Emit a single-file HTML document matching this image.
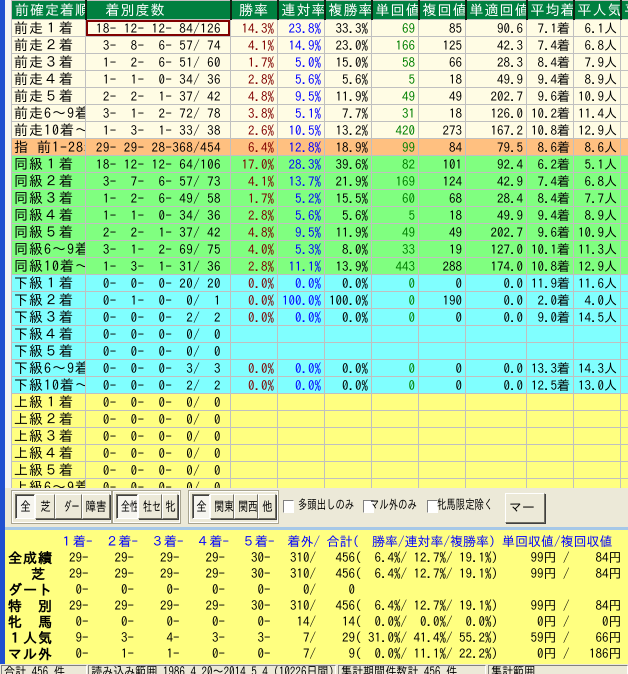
<!DOCTYPE html>
<html><head><meta charset="utf-8"><style>
*{margin:0;padding:0;box-sizing:border-box}
body{width:628px;height:674px;overflow:hidden;background:#ece9d8;position:relative;font-family:"IPAGothic","Noto Sans CJK JP",monospace;font-size:13px}
#strip{position:absolute;left:0;top:0;width:5px;height:664px;background:#1f4fd0}
#strip2{position:absolute;left:5px;top:0;width:6px;height:488px;background:#f4f4f4}
#tw{position:absolute;left:11px;top:0;width:617px;height:488px;overflow:hidden}
table{border-collapse:collapse;table-layout:fixed;width:625px}
td,th{border:1px solid #c0c0c0;height:17px;line-height:15px;white-space:pre;overflow:hidden;padding:0 3px;text-align:right;font-weight:normal}
th{background:#008040;color:#fff;height:19px;border:1px solid #c0c0c0;border-right:2px solid #102010;text-align:center;font-size:14px;letter-spacing:1px}
th.l{text-align:left}
td.l{text-align:left;letter-spacing:1px;font-size:14px;padding-left:2px}
td.n{padding-right:9px;letter-spacing:0.45px}
.r{color:#800000}.b{color:#0000ff}.g{color:#008000}
tr.c td{background:#fffce4}tr.o td{background:#ffc080}tr.gr td{background:#80ff80}tr.cy td{background:#80ffff}tr.y td{background:#ffff80}
.sel{box-shadow:inset 0 0 0 2px #800000}
#panel{position:absolute;left:5px;top:488px;width:623px;height:39px;background:#ece9d8}
.grp{position:absolute;top:3px;height:32px;border:1px solid #fff;outline:1px solid #a8a490;background:#ece9d8}
.bt{position:absolute;top:2px;height:25px;border:1px solid;border-color:#fff #716f64 #716f64 #fff;box-shadow:1px 1px 0 #404040;font-size:13px;line-height:23px;text-align:center;background:#ece9d8;white-space:nowrap;overflow:hidden}
.bt span{display:inline-block;transform:scaleX(.8)}
.bt.on{border-color:#716f64 #fff #fff #716f64;box-shadow:inset 1px 1px 0 #404040;background:#f6f5ef}
.cb{position:absolute;top:12px;width:11px;height:13px;background:#fff;border:1px solid;border-color:#808080 #fff #fff #808080}
.ct{position:absolute;top:10px;font-size:13px;white-space:nowrap;transform:scaleX(.72);transform-origin:left}
#bl{position:absolute;left:5px;top:527px;width:623px;height:3px;background:#a6c8e8}
#sum{position:absolute;left:5px;top:530px;width:623px;height:134px;background:#ffff80;font-size:13px}
.s{position:absolute;white-space:pre;line-height:16px}
.h{color:#0000ff}
.lb{position:absolute;left:3px;font-weight:bold;font-size:14px;line-height:16px;letter-spacing:1px}
#st{position:absolute;left:0;top:664px;width:628px;height:10px;background:#ece9d8;overflow:hidden;font-size:13px}
#st div{position:absolute;top:1px;height:14px;border:1px solid;border-color:#808080 #fff #fff #808080;line-height:12px;padding-left:2px;white-space:pre;overflow:hidden}
#st span{display:inline-block;transform:scaleX(.85);transform-origin:left}
</style></head><body>
<div id="strip"></div><div id="strip2"></div>
<div id="tw"><table>
<colgroup><col style="width:74px"><col style="width:145px"><col style="width:47px"><col style="width:47px"><col style="width:47px"><col style="width:47px"><col style="width:47px"><col style="width:61px"><col style="width:47px"><col style="width:47px"><col style="width:16px"></colgroup>
<tr><th class="l">前確定着順</th><th class="l">  着別度数</th><th>勝率</th><th>連対率</th><th>複勝率</th><th>単回値</th><th>複回値</th><th>単適回値</th><th>平均着</th><th>平人気</th><th class="l">平</th></tr>
<tr class="c"><td class="l">前走１着</td><td class="n sel">18- 12- 12- 84/126</td><td class="r">14.3%</td><td class="b">23.8%</td><td>33.3%</td><td class="g">69</td><td>85</td><td>90.6</td><td>7.1着</td><td>6.1人</td><td></td></tr>
<tr class="c"><td class="l">前走２着</td><td class="n"> 3-  8-  6- 57/ 74</td><td class="r">4.1%</td><td class="b">14.9%</td><td>23.0%</td><td class="g">166</td><td>125</td><td>42.3</td><td>7.4着</td><td>6.8人</td><td></td></tr>
<tr class="c"><td class="l">前走３着</td><td class="n"> 1-  2-  6- 51/ 60</td><td class="r">1.7%</td><td class="b">5.0%</td><td>15.0%</td><td class="g">58</td><td>66</td><td>28.3</td><td>8.4着</td><td>7.9人</td><td></td></tr>
<tr class="c"><td class="l">前走４着</td><td class="n"> 1-  1-  0- 34/ 36</td><td class="r">2.8%</td><td class="b">5.6%</td><td>5.6%</td><td class="g">5</td><td>18</td><td>49.9</td><td>9.4着</td><td>8.9人</td><td></td></tr>
<tr class="c"><td class="l">前走５着</td><td class="n"> 2-  2-  1- 37/ 42</td><td class="r">4.8%</td><td class="b">9.5%</td><td>11.9%</td><td class="g">49</td><td>49</td><td>202.7</td><td>9.6着</td><td>10.9人</td><td></td></tr>
<tr class="c"><td class="l">前走6～9着</td><td class="n"> 3-  1-  2- 72/ 78</td><td class="r">3.8%</td><td class="b">5.1%</td><td>7.7%</td><td class="g">31</td><td>18</td><td>126.0</td><td>10.2着</td><td>11.4人</td><td></td></tr>
<tr class="c"><td class="l">前走10着～</td><td class="n"> 1-  3-  1- 33/ 38</td><td class="r">2.6%</td><td class="b">10.5%</td><td>13.2%</td><td class="g">420</td><td>273</td><td>167.2</td><td>10.8着</td><td>12.9人</td><td></td></tr>
<tr class="o"><td class="l">指 前1-28着</td><td class="n">29- 29- 28-368/454</td><td class="r">6.4%</td><td class="b">12.8%</td><td>18.9%</td><td class="g">99</td><td>84</td><td>79.5</td><td>8.6着</td><td>8.6人</td><td></td></tr>
<tr class="gr"><td class="l">同級１着</td><td class="n">18- 12- 12- 64/106</td><td class="r">17.0%</td><td class="b">28.3%</td><td>39.6%</td><td class="g">82</td><td>101</td><td>92.4</td><td>6.2着</td><td>5.1人</td><td></td></tr>
<tr class="gr"><td class="l">同級２着</td><td class="n"> 3-  7-  6- 57/ 73</td><td class="r">4.1%</td><td class="b">13.7%</td><td>21.9%</td><td class="g">169</td><td>124</td><td>42.9</td><td>7.4着</td><td>6.8人</td><td></td></tr>
<tr class="gr"><td class="l">同級３着</td><td class="n"> 1-  2-  6- 49/ 58</td><td class="r">1.7%</td><td class="b">5.2%</td><td>15.5%</td><td class="g">60</td><td>68</td><td>28.4</td><td>8.4着</td><td>7.7人</td><td></td></tr>
<tr class="gr"><td class="l">同級４着</td><td class="n"> 1-  1-  0- 34/ 36</td><td class="r">2.8%</td><td class="b">5.6%</td><td>5.6%</td><td class="g">5</td><td>18</td><td>49.9</td><td>9.4着</td><td>8.9人</td><td></td></tr>
<tr class="gr"><td class="l">同級５着</td><td class="n"> 2-  2-  1- 37/ 42</td><td class="r">4.8%</td><td class="b">9.5%</td><td>11.9%</td><td class="g">49</td><td>49</td><td>202.7</td><td>9.6着</td><td>10.9人</td><td></td></tr>
<tr class="gr"><td class="l">同級6～9着</td><td class="n"> 3-  1-  2- 69/ 75</td><td class="r">4.0%</td><td class="b">5.3%</td><td>8.0%</td><td class="g">33</td><td>19</td><td>127.0</td><td>10.1着</td><td>11.3人</td><td></td></tr>
<tr class="gr"><td class="l">同級10着～</td><td class="n"> 1-  3-  1- 31/ 36</td><td class="r">2.8%</td><td class="b">11.1%</td><td>13.9%</td><td class="g">443</td><td>288</td><td>174.0</td><td>10.8着</td><td>12.9人</td><td></td></tr>
<tr class="cy"><td class="l">下級１着</td><td class="n"> 0-  0-  0- 20/ 20</td><td class="r">0.0%</td><td class="b">0.0%</td><td>0.0%</td><td class="g">0</td><td>0</td><td>0.0</td><td>11.9着</td><td>11.6人</td><td></td></tr>
<tr class="cy"><td class="l">下級２着</td><td class="n"> 0-  1-  0-  0/  1</td><td class="r">0.0%</td><td class="b">100.0%</td><td>100.0%</td><td class="g">0</td><td>190</td><td>0.0</td><td>2.0着</td><td>4.0人</td><td></td></tr>
<tr class="cy"><td class="l">下級３着</td><td class="n"> 0-  0-  0-  2/  2</td><td class="r">0.0%</td><td class="b">0.0%</td><td>0.0%</td><td class="g">0</td><td>0</td><td>0.0</td><td>9.0着</td><td>14.5人</td><td></td></tr>
<tr class="cy"><td class="l">下級４着</td><td class="n"> 0-  0-  0-  0/  0</td><td></td><td></td><td></td><td></td><td></td><td></td><td></td><td></td><td></td></tr>
<tr class="cy"><td class="l">下級５着</td><td class="n"> 0-  0-  0-  0/  0</td><td></td><td></td><td></td><td></td><td></td><td></td><td></td><td></td><td></td></tr>
<tr class="cy"><td class="l">下級6～9着</td><td class="n"> 0-  0-  0-  3/  3</td><td class="r">0.0%</td><td class="b">0.0%</td><td>0.0%</td><td class="g">0</td><td>0</td><td>0.0</td><td>13.3着</td><td>14.3人</td><td></td></tr>
<tr class="cy"><td class="l">下級10着～</td><td class="n"> 0-  0-  0-  2/  2</td><td class="r">0.0%</td><td class="b">0.0%</td><td>0.0%</td><td class="g">0</td><td>0</td><td>0.0</td><td>12.5着</td><td>13.0人</td><td></td></tr>
<tr class="y"><td class="l">上級１着</td><td class="n"> 0-  0-  0-  0/  0</td><td></td><td></td><td></td><td></td><td></td><td></td><td></td><td></td><td></td></tr>
<tr class="y"><td class="l">上級２着</td><td class="n"> 0-  0-  0-  0/  0</td><td></td><td></td><td></td><td></td><td></td><td></td><td></td><td></td><td></td></tr>
<tr class="y"><td class="l">上級３着</td><td class="n"> 0-  0-  0-  0/  0</td><td></td><td></td><td></td><td></td><td></td><td></td><td></td><td></td><td></td></tr>
<tr class="y"><td class="l">上級４着</td><td class="n"> 0-  0-  0-  0/  0</td><td></td><td></td><td></td><td></td><td></td><td></td><td></td><td></td><td></td></tr>
<tr class="y"><td class="l">上級５着</td><td class="n"> 0-  0-  0-  0/  0</td><td></td><td></td><td></td><td></td><td></td><td></td><td></td><td></td><td></td></tr>
<tr class="y"><td class="l">上級6～9着</td><td class="n"> 0-  0-  0-  0/  0</td><td></td><td></td><td></td><td></td><td></td><td></td><td></td><td></td><td></td></tr>
</table></div>

<div id="panel">
<div class="grp" style="left:7px;width:99px"><div class="bt on" style="left:2px;width:20px"><span>全</span></div><div class="bt" style="left:22px;width:20px"><span>芝</span></div><div class="bt" style="left:42px;width:27px"><span style="transform:scaleX(.6)">ダート</span></div><div class="bt" style="left:69px;width:28px"><span>障害</span></div></div>
<div class="grp" style="left:108px;width:67px"><div class="bt on" style="left:2px;width:22px"><span style="transform:scaleX(.7)">全性</span></div><div class="bt" style="left:24px;width:24px"><span style="transform:scaleX(.7)">牡セ</span></div><div class="bt" style="left:48px;width:16px"><span>牝</span></div></div>
<div class="grp" style="left:184px;width:89px"><div class="bt on" style="left:2px;width:18px"><span>全</span></div><div class="bt" style="left:20px;width:24px"><span style="transform:scaleX(.75)">関東</span></div><div class="bt" style="left:44px;width:24px"><span style="transform:scaleX(.75)">関西</span></div><div class="bt" style="left:68px;width:18px"><span>他</span></div></div>
<div class="cb" style="left:278px"></div><div class="ct" style="left:293px">多頭出しのみ</div>
<div class="cb" style="left:358px"></div><div class="ct" style="left:365px">マル外のみ</div>
<div class="cb" style="left:422px"></div><div class="ct" style="left:432px">牝馬限定除く</div>
<div class="bt" style="left:500px;top:5px;width:40px;height:30px;line-height:28px;text-align:left;padding-left:3px">マー</div>
</div>
<div id="bl"></div>
<div id="sum">
<div class="s h" style="top:4px;left:55px">１着-  ２着-  ３着-  ４着-  ５着-  着外/ 合計(  勝率/連対率/複勝率) 単回収値/複回収値</div>
<div class="lb" style="top:20px">全成績</div>
<div class="s" style="top:20px;left:64px">29-    29-    29-    29-    30-   310/   456(  6.4%/ 12.7%/ 19.1%)     99円 /    84円</div>
<div class="lb" style="top:36px;left:26px">芝</div>
<div class="s" style="top:36px;left:64px">29-    29-    29-    29-    30-   310/   456(  6.4%/ 12.7%/ 19.1%)     99円 /    84円</div>
<div class="lb" style="top:52px">ダート</div>
<div class="s" style="top:52px;left:64px"> 0-     0-     0-     0-     0-     0/     0</div>
<div class="lb" style="top:68px">特　別</div>
<div class="s" style="top:68px;left:64px">29-    29-    29-    29-    30-   310/   456(  6.4%/ 12.7%/ 19.1%)     99円 /    84円</div>
<div class="lb" style="top:84px">牝　馬</div>
<div class="s" style="top:84px;left:64px"> 0-     0-     0-     0-     0-    14/    14(  0.0%/  0.0%/  0.0%)      0円 /     0円</div>
<div class="lb" style="top:100px">１人気</div>
<div class="s" style="top:100px;left:64px"> 9-     3-     4-     3-     3-     7/    29( 31.0%/ 41.4%/ 55.2%)     59円 /    66円</div>
<div class="lb" style="top:116px">マル外</div>
<div class="s" style="top:116px;left:64px"> 0-     1-     1-     0-     0-     7/     9(  0.0%/ 11.1%/ 22.2%)      0円 /   186円</div>
</div>
<div id="st">
<div style="left:1px;width:86px"><span>合計 456 件</span></div>
<div style="left:88px;width:248px"><span>読み込み範囲 1986.4.20～2014.5.4 (10226日間)</span></div>
<div style="left:338px;width:148px"><span>集計期間件数計 456 件</span></div>
<div style="left:488px;width:140px"><span>集計範囲</span></div>
</div>
</body></html>
